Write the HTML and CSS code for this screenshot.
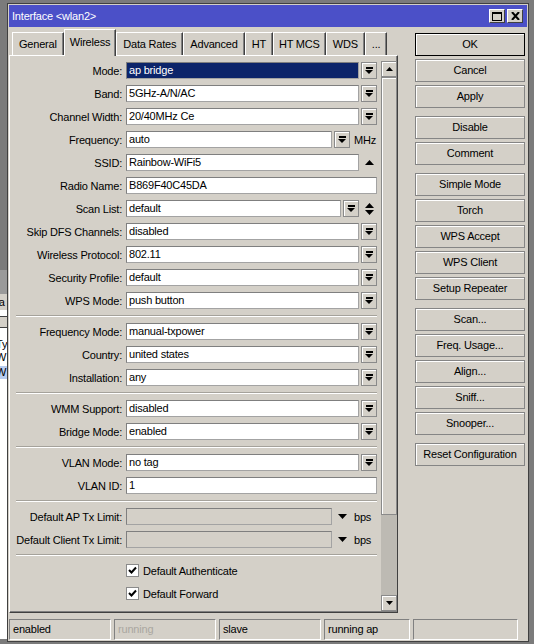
FILE: index.html
```html
<!DOCTYPE html>
<html lang="en">
<head>
  <meta charset="UTF-8" />
  <title>Interface &lt;wlan2&gt;</title>
  <link rel="stylesheet" href="styles.css">
</head>
<body>
  <!-- window behind the dialog, only its right edge shows -->
  <div class="back-window">
    <div class="bw-tab">ta</div>
    <div class="bw-btn"></div>
    <div class="bw-list">
      <div>Ty</div>
      <div>W</div>
      <div class="sel">W</div>
    </div>
  </div>

  <div class="window">
    <div class="titlebar">
      <span class="title">Interface &lt;wlan2&gt;</span>
      <div class="title-btns">
        <span class="tbtn">
          <svg width="10" height="9" viewBox="0 0 10 9"><rect x="0.5" y="0.5" width="9" height="8" fill="none" stroke="#000"/><rect x="0" y="0" width="10" height="2" fill="#000"/></svg>
        </span>
        <span class="tbtn">
          <svg width="9" height="8" viewBox="0 0 9 8"><path d="M1 0 L8 8 M8 0 L1 8" stroke="#000" stroke-width="2"/></svg>
        </span>
      </div>
    </div>

    <div class="main">
      <div class="left">
        <div class="tabs">
          <div class="tab">General</div>
          <div class="tab active">Wireless</div>
          <div class="tab">Data Rates</div>
          <div class="tab">Advanced</div>
          <div class="tab">HT</div>
          <div class="tab narrow">HT MCS</div>
          <div class="tab">WDS</div>
          <div class="tab">...</div>
        </div>

        <div class="panel">
          <div class="form">
            <div class="row"><div class="label">Mode:</div><div class="field"><div class="input selected">ap bridge</div><div class="dd"></div></div></div>
            <div class="row"><div class="label">Band:</div><div class="field"><div class="input">5GHz-A/N/AC</div><div class="dd"></div></div></div>
            <div class="row"><div class="label">Channel Width:</div><div class="field"><div class="input">20/40MHz Ce</div><div class="dd"></div></div></div>
            <div class="row"><div class="label">Frequency:</div><div class="field"><div class="input">auto</div><div class="dd"></div><div class="unit">MHz</div></div></div>
            <div class="row"><div class="label">SSID:</div><div class="field"><div class="input">Rainbow-WiFi5</div>
              <div class="glyph"><svg width="9" height="5" viewBox="0 0 9 5"><polygon points="0,5 9,5 4.5,0" fill="#000"/></svg></div></div></div>
            <div class="row"><div class="label">Radio Name:</div><div class="field"><div class="input">B869F40C45DA</div></div></div>
            <div class="row"><div class="label">Scan List:</div><div class="field"><div class="input">default</div><div class="dd"></div>
              <div class="glyph"><svg width="9" height="12" viewBox="0 0 9 12"><polygon points="0,5 9,5 4.5,0" fill="#000"/><polygon points="0,7 9,7 4.5,12" fill="#000"/></svg></div></div></div>
            <div class="row"><div class="label">Skip DFS Channels:</div><div class="field"><div class="input">disabled</div><div class="dd"></div></div></div>
            <div class="row"><div class="label">Wireless Protocol:</div><div class="field"><div class="input">802.11</div><div class="dd"></div></div></div>
            <div class="row"><div class="label">Security Profile:</div><div class="field"><div class="input">default</div><div class="dd"></div></div></div>
            <div class="row"><div class="label">WPS Mode:</div><div class="field"><div class="input">push button</div><div class="dd"></div></div></div>
            <div class="sep"></div>
            <div class="row"><div class="label">Frequency Mode:</div><div class="field"><div class="input">manual-txpower</div><div class="dd"></div></div></div>
            <div class="row"><div class="label">Country:</div><div class="field"><div class="input">united states</div><div class="dd"></div></div></div>
            <div class="row"><div class="label">Installation:</div><div class="field"><div class="input">any</div><div class="dd"></div></div></div>
            <div class="sep"></div>
            <div class="row"><div class="label">WMM Support:</div><div class="field"><div class="input">disabled</div><div class="dd"></div></div></div>
            <div class="row"><div class="label">Bridge Mode:</div><div class="field"><div class="input">enabled</div><div class="dd"></div></div></div>
            <div class="sep"></div>
            <div class="row"><div class="label">VLAN Mode:</div><div class="field"><div class="input">no tag</div><div class="dd"></div></div></div>
            <div class="row"><div class="label">VLAN ID:</div><div class="field"><div class="input">1</div></div></div>
            <div class="sep"></div>
            <div class="row"><div class="label">Default AP Tx Limit:</div><div class="field"><div class="input disabled"></div>
              <div class="glyph"><svg width="9" height="5" viewBox="0 0 9 5"><polygon points="0,0 9,0 4.5,5" fill="#000"/></svg></div><div class="unit">bps</div></div></div>
            <div class="row"><div class="label">Default Client Tx Limit:</div><div class="field"><div class="input disabled"></div>
              <div class="glyph"><svg width="9" height="5" viewBox="0 0 9 5"><polygon points="0,0 9,0 4.5,5" fill="#000"/></svg></div><div class="unit">bps</div></div></div>
            <div class="sep"></div>
            <div class="row"><div class="label"></div><div class="field check">
              <span class="checkbox"><svg width="9" height="9" viewBox="0 0 9 9"><path d="M1 4 L3.5 6.5 L8 1.5" fill="none" stroke="#000" stroke-width="2"/></svg></span>Default Authenticate</div></div>
            <div class="row"><div class="label"></div><div class="field check">
              <span class="checkbox"><svg width="9" height="9" viewBox="0 0 9 9"><path d="M1 4 L3.5 6.5 L8 1.5" fill="none" stroke="#000" stroke-width="2"/></svg></span>Default Forward</div></div>
          </div>

          <div class="scrollbar">
            <div class="sb-btn"><svg width="7" height="4" viewBox="0 0 7 4"><polygon points="0,4 7,4 3.5,0" fill="#000"/></svg></div>
            <div class="thumb"></div>
            <div class="track"></div>
            <div class="sb-btn"><svg width="7" height="4" viewBox="0 0 7 4"><polygon points="0,0 7,0 3.5,4" fill="#000"/></svg></div>
          </div>
        </div>
      </div>

      <div class="buttons">
        <div class="group">
          <div class="btn default">OK</div>
          <div class="btn">Cancel</div>
          <div class="btn">Apply</div>
        </div>
        <div class="group">
          <div class="btn">Disable</div>
          <div class="btn">Comment</div>
        </div>
        <div class="group">
          <div class="btn">Simple Mode</div>
          <div class="btn">Torch</div>
          <div class="btn">WPS Accept</div>
          <div class="btn">WPS Client</div>
          <div class="btn">Setup Repeater</div>
        </div>
        <div class="group">
          <div class="btn">Scan...</div>
          <div class="btn">Freq. Usage...</div>
          <div class="btn">Align...</div>
          <div class="btn">Sniff...</div>
          <div class="btn">Snooper...</div>
        </div>
        <div class="group">
          <div class="btn">Reset Configuration</div>
        </div>
      </div>
    </div>

    <div class="statusbar">
      <div class="cell c1">enabled</div>
      <div class="cell c2 muted">running</div>
      <div class="cell c3">slave</div>
      <div class="cell c4">running ap</div>
      <div class="cell c5"></div>
    </div>
  </div>
</body>
</html>
```

FILE: styles.css
```css
body {
  margin: 0;
  background-color: #7b7b7b;
  font-family: 'Liberation Sans', Arial, sans-serif;
  font-size: 11px;
  letter-spacing: -0.2px;
  color: #000;
  position: relative;
  height: 644px;
  overflow: hidden;
}

/* window peeking out on the left */
.back-window {
  position: absolute;
  left: 0;
  top: 270px;
  width: 7px;
  height: 345px;
  background: #fff;
  border-top: 24px solid #9a9a9a;
  overflow: hidden;
}
.bw-tab {
  height: 16px;
  line-height: 16px;
  background: #d4d0c8;
  margin-left: -4px;
}
.bw-btn {
  height: 10px;
  background: #d4d0c8;
  border-top: 1px solid #404040;
  border-bottom: 1px solid #404040;
  margin: 6px 0 4px;
}
.bw-list {
  padding-top: 6px;
}
.bw-list div {
  height: 13px;
  line-height: 13px;
  margin-left: -4px;
}
.bw-list .sel {
  background: #b8cdf0;
  margin-top: 2px;
}

.window {
  margin: 3px 0 0 7px;
  width: 522px;
  box-sizing: border-box;
  border: 1px solid #404040;
  padding: 1px;
  background: #d4d0c8;
}

.titlebar {
  height: 22px;
  background: #4b50c8;
  color: #fff;
  display: flex;
  align-items: center;
  justify-content: space-between;
  padding: 0 4px 0 3px;
}
.title-btns {
  display: flex;
  gap: 2px;
}
.tbtn {
  width: 16px;
  height: 14px;
  box-sizing: border-box;
  background: #d4d0c8;
  border: 1px solid;
  border-color: #fff #404040 #404040 #fff;
  display: flex;
  align-items: center;
  justify-content: center;
}

.main {
  display: flex;
  margin-top: 2px;
}
.left {
  width: 389px;
}

.tabs {
  display: flex;
  align-items: flex-end;
  height: 26px;
  padding-left: 3px;
}
.tab {
  height: 23px;
  box-sizing: border-box;
  padding: 0 6px;
  line-height: 22px;
  border: 1px solid;
  border-color: #fff #404040 transparent #fff;
  border-bottom: none;
  box-shadow: inset -1px 0 #808080;
  white-space: nowrap;
}
.tab.narrow {
  padding: 0 5px;
}
.tab.active {
  height: 27px;
  line-height: 24px;
  margin-bottom: -1px;
  padding: 0 5px;
  background: #d4d0c8;
  position: relative;
  z-index: 1;
}

.panel {
  display: flex;
  height: 558px;
  box-sizing: border-box;
  border: 1px solid;
  border-color: #fff #404040 #404040 #fff;
  box-shadow: inset -1px -1px #808080;
}
.form {
  width: 371px;
  padding-top: 6px;
  box-sizing: border-box;
  overflow: hidden;
}
.row {
  display: flex;
  align-items: center;
  height: 17px;
  margin-bottom: 6px;
}
.label {
  width: 112px;
  text-align: right;
  white-space: nowrap;
}
.field {
  display: flex;
  align-items: center;
  gap: 2px;
  width: 251px;
  margin-left: 4px;
}
.input {
  flex: 1;
  height: 17px;
  box-sizing: border-box;
  background: #fff;
  border: 1px solid #a3a3a3;
  border-top-color: #7f7f7f;
  border-left-color: #7f7f7f;
  padding-left: 2px;
  line-height: 15px;
  white-space: nowrap;
  overflow: hidden;
}
.input.selected {
  background: #0c246a;
  color: #fff;
}
.input.disabled {
  background: #d4d0c8;
}
.dd {
  width: 16px;
  height: 17px;
  box-sizing: border-box;
  border: 1px solid #8a8a8a;
  box-shadow: inset 1px 1px #fff;
  display: flex;
  flex-direction: column;
  align-items: center;
  justify-content: center;
  gap: 1px;
}
.dd::before {
  content: "";
  width: 7px;
  height: 2px;
  background: #000;
}
.dd::after {
  content: "";
  border-left: 4px solid transparent;
  border-right: 4px solid transparent;
  border-top: 4px solid #000;
}
.glyph {
  width: 16px;
  height: 17px;
  display: flex;
  align-items: center;
  justify-content: center;
}
.unit {
  width: 25px;
  padding-left: 2px;
  box-sizing: border-box;
}
.check {
  gap: 4px;
}
.checkbox {
  width: 13px;
  height: 13px;
  box-sizing: border-box;
  background: #fff;
  border: 1px solid #8a8a8a;
  display: flex;
  align-items: center;
  justify-content: center;
}
.sep {
  border-top: 1px solid #a5a29b;
  border-bottom: 1px solid #fff;
  margin: 1px 4px 6px 6px;
}

.scrollbar {
  width: 16px;
  display: flex;
  flex-direction: column;
  margin: 5px 0 1px;
}
.sb-btn, .thumb {
  box-sizing: border-box;
  border: 1px solid #8a8a8a;
  box-shadow: inset 1px 1px #fff;
  background: #d4d0c8;
}
.sb-btn {
  height: 16px;
  display: flex;
  align-items: center;
  justify-content: center;
}
.thumb {
  height: 438px;
}
.track {
  flex: 1;
  background: #bdbab3;
}

.buttons {
  width: 110px;
  margin-left: 17px;
  padding-top: 4px;
  display: flex;
  flex-direction: column;
  gap: 8px;
}
.group {
  display: flex;
  flex-direction: column;
  gap: 3px;
}
.btn {
  height: 23px;
  box-sizing: border-box;
  border: 1px solid #858585;
  box-shadow: inset 1px 1px #fff;
  text-align: center;
  line-height: 21px;
  white-space: nowrap;
}
.btn.default {
  border-color: #000;
}

.statusbar {
  display: flex;
  gap: 3px;
  margin-top: 6px;
}
.cell {
  height: 21px;
  box-sizing: border-box;
  border: 1px solid;
  border-color: #808080 #fff #fff #808080;
  padding-left: 3px;
  line-height: 19px;
  white-space: nowrap;
}
.c1, .c2, .c3 { width: 102px; }
.c4 { width: 86px; }
.c5 { width: 105px; }
.muted {
  color: #aaa7a0;
}
```
